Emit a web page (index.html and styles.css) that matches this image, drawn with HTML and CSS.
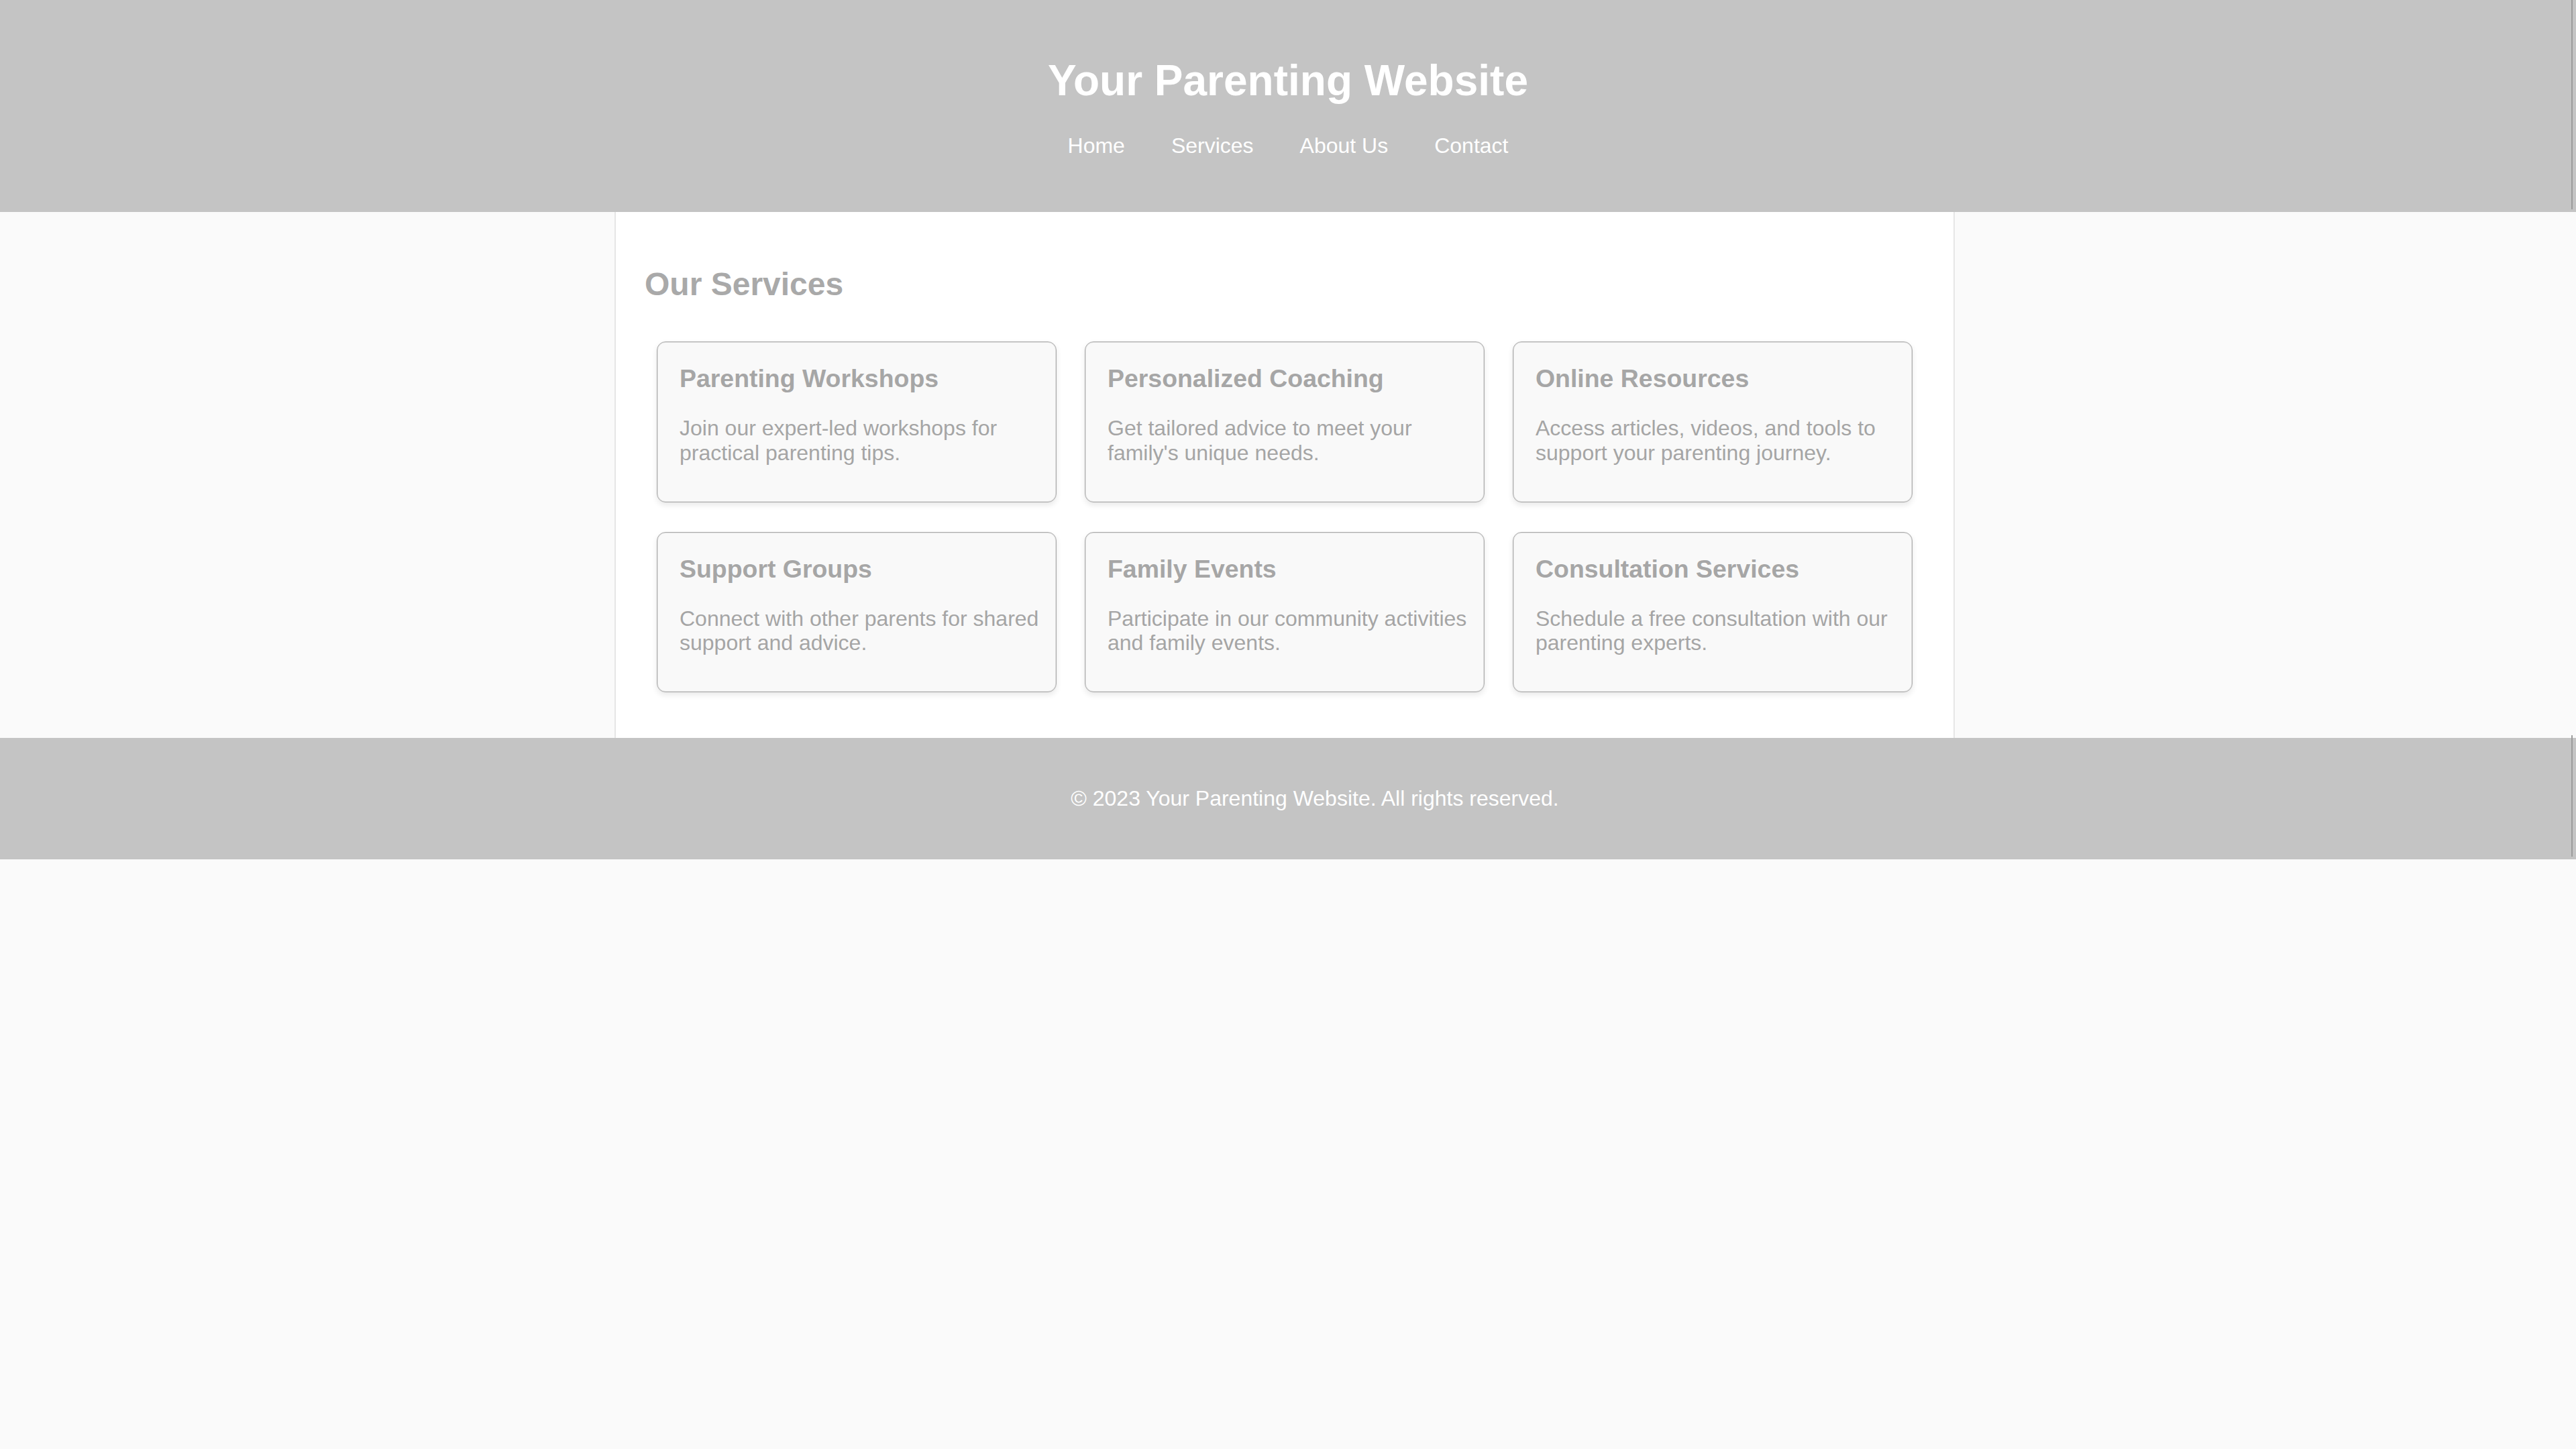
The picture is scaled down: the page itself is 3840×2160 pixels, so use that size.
FILE: index.html
```html
<!DOCTYPE html>
<html lang="en">
<head>
<meta charset="utf-8">
<title>Your Parenting Website</title>
<link rel="stylesheet" href="styles.css">
</head>
<body>
<header class="site-header">
  <h1 class="site-title">Your Parenting Website</h1>
  <nav class="site-nav">
    <ul class="nav-list">
      <li><a href="#">Home</a></li>
      <li><a href="#">Services</a></li>
      <li><a href="#">About Us</a></li>
      <li><a href="#">Contact</a></li>
    </ul>
  </nav>
</header>
<div class="page">
  <main class="container">
    <h2 class="section-title">Our Services</h2>
    <div class="cards">
      <div class="card"><h3>Parenting Workshops</h3><p>Join our expert-led workshops for practical parenting tips.</p></div>
      <div class="card"><h3>Personalized Coaching</h3><p>Get tailored advice to meet your family's unique needs.</p></div>
      <div class="card"><h3>Online Resources</h3><p>Access articles, videos, and tools to support your parenting journey.</p></div>
      <div class="card"><h3>Support Groups</h3><p>Connect with other parents for shared support and advice.</p></div>
      <div class="card"><h3>Family Events</h3><p>Participate in our community activities and family events.</p></div>
      <div class="card"><h3>Consultation Services</h3><p>Schedule a free consultation with our parenting experts.</p></div>
    </div>
  </main>
</div>
<footer class="site-footer">
  <p>&copy; 2023 Your Parenting Website. All rights reserved.</p>
</footer>
</body>
</html>
```
FILE: styles.css
```css
html, body {
  margin: 0;
  padding: 0;
}
body {
  background: #fafafa;
  font-family: "Liberation Sans", Arial, sans-serif;
}
.site-header {
  position: relative;
  background: #c4c4c4;
  color: #ffffff;
  text-align: center;
  padding: 40px 0 80px;
  height: 316px;
  box-sizing: border-box;
}
.site-header::after {
  content: "";
  position: absolute;
  top: 0;
  right: 5px;
  width: 2px;
  height: 312px;
  background: #9c9c9c;
}
.site-title {
  margin: 43px 0 42px;
  font-size: 64px;
  font-weight: bold;
  line-height: 74px;
}
.nav-list {
  list-style: none;
  margin: 0;
  padding: 0;
  display: flex;
  justify-content: center;
  gap: 69px;
  font-size: 32px;
  line-height: 37px;
}
.nav-list a {
  color: #ffffff;
  text-decoration: none;
}
.page {
  display: flex;
  justify-content: center;
  padding-right: 10px;
}
.container {
  width: 1998px;
  background: #ffffff;
  border-left: 2px solid #e6e6e6;
  border-right: 2px solid #e6e6e6;
  padding: 40px 43px 67px;
  box-sizing: border-box;
  height: 784px;
}
.section-title {
  margin: 40px 0 58px;
  font-size: 48px;
  line-height: 55px;
  font-weight: bold;
  color: #a9a9a9;
}
.cards {
  margin: 0 18px;
  display: grid;
  grid-template-columns: repeat(3, 1fr);
  column-gap: 42px;
  row-gap: 44px;
}
.card {
  background: #f9f9f9;
  border: 1px solid #ababab;
  border-radius: 13px;
  box-shadow: inset 0 0 0 1px #e2e2e2, 0 4px 8px rgba(0, 0, 0, 0.09);
  padding: 33px 25px 54px 33px;
}
.card h3 {
  margin: 0 0 34px;
  font-size: 37.44px;
  line-height: 43px;
  font-weight: bold;
  color: #a6a6a6;
}
.card p {
  margin: 0;
  font-size: 32px;
  line-height: 36.8px;
  color: #a5a5a5;
}
.site-footer {
  position: relative;
  background: #c4c4c4;
  color: #ffffff;
  text-align: center;
  padding: 40px 0 40px 80px;
  height: 181px;
  box-sizing: border-box;
}
.site-footer::after {
  content: "";
  position: absolute;
  top: -4px;
  bottom: 4px;
  right: 5px;
  width: 2px;
  background: #9c9c9c;
}
.site-footer p {
  margin: 32px 0;
  font-size: 32px;
  line-height: 37px;
}
```
